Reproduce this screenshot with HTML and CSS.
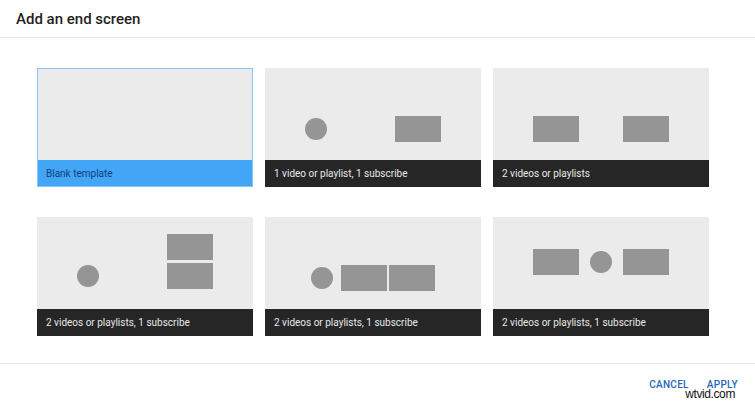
FILE: index.html
```html
<!DOCTYPE html>
<html lang="en">
<head>
    <meta charset="UTF-8">
    <meta name="viewport" content="width=device-width, initial-scale=1.0">
    <title>Add an end screen</title>
    <link rel="stylesheet" href="styles.css">
</head>
<body>
    <div class="dialog">
        <header class="dialog-header">
            <h1>Add an end screen</h1>
        </header>

        <main class="templates">
            <div class="template selected">
                <div class="preview"></div>
                <div class="label">Blank template</div>
            </div>
            <div class="template">
                <div class="preview">
                    <span class="shape circle c-2"></span>
                    <span class="shape rect r-2"></span>
                </div>
                <div class="label">1 video or playlist, 1 subscribe</div>
            </div>
            <div class="template">
                <div class="preview">
                    <span class="shape rect r-3a"></span>
                    <span class="shape rect r-3b"></span>
                </div>
                <div class="label">2 videos or playlists</div>
            </div>
            <div class="template">
                <div class="preview">
                    <span class="shape circle c-4"></span>
                    <span class="shape rect r-4a"></span>
                    <span class="shape rect r-4b"></span>
                </div>
                <div class="label">2 videos or playlists, 1 subscribe</div>
            </div>
            <div class="template">
                <div class="preview">
                    <span class="shape circle c-5"></span>
                    <span class="shape rect r-5a"></span>
                    <span class="shape rect r-5b"></span>
                </div>
                <div class="label">2 videos or playlists, 1 subscribe</div>
            </div>
            <div class="template">
                <div class="preview">
                    <span class="shape rect r-6a"></span>
                    <span class="shape circle c-6"></span>
                    <span class="shape rect r-6b"></span>
                </div>
                <div class="label">2 videos or playlists, 1 subscribe</div>
            </div>
        </main>

        <footer class="dialog-footer">
            <button class="btn">CANCEL</button>
            <button class="btn">APPLY</button>
            <span class="watermark">wtvid.com</span>
        </footer>
    </div>
</body>
</html>
```

FILE: styles.css
```css
* {
    margin: 0;
    padding: 0;
    box-sizing: border-box;
}

body {
    font-family: Roboto, 'Liberation Sans', Arial, sans-serif;
    color: #222;
    background-color: #fff;
}

.dialog {
    width: 755px;
    height: 403px;
    display: flex;
    flex-direction: column;
}

.dialog-header {
    height: 38px;
    padding: 9px 16px 0;
    border-bottom: 1px solid #e6e6e6;
}

.dialog-header h1 {
    font-size: 15px;
    font-weight: 500;
    line-height: 20px;
    color: #1f1f1f;
}

.templates {
    display: grid;
    grid-template-columns: repeat(3, 216px);
    grid-auto-rows: 119px;
    column-gap: 12px;
    row-gap: 30px;
    padding: 30px 0 0 37px;
    height: 326px;
    border-bottom: 1px solid #e6e6e6;
}

.template {
    display: flex;
    flex-direction: column;
    cursor: pointer;
}

.preview {
    position: relative;
    height: 92px;
    background-color: #ebebeb;
}

.label {
    height: 27px;
    padding: 0 9px;
    display: flex;
    align-items: center;
    font-size: 10px;
    background-color: #262626;
    color: #e8e8e8;
}

.template.selected {
    border: 1px solid #8cc4f2;
}

.template.selected .preview {
    height: 91px;
}

.template.selected .label {
    height: 26px;
    padding-left: 8px;
    background-color: #42a5f5;
    color: #0d3f80;
}

.shape {
    position: absolute;
    background-color: #959595;
}

.rect {
    width: 46px;
    height: 26px;
}

.circle {
    width: 22px;
    height: 22px;
    border-radius: 50%;
}

/* 1 video, 1 subscribe */
.c-2 { left: 40px; top: 50px; }
.r-2 { left: 130px; top: 48px; }

/* 2 videos */
.r-3a { left: 40px; top: 48px; }
.r-3b { left: 130px; top: 48px; }

/* stacked videos */
.c-4 { left: 40px; top: 48px; }
.r-4a { left: 130px; top: 17px; }
.r-4b { left: 130px; top: 46px; }

/* videos side by side */
.c-5 { left: 46px; top: 50px; }
.r-5a { left: 76px; top: 48px; }
.r-5b { left: 124px; top: 48px; }

/* circle between videos */
.r-6a { left: 40px; top: 32px; }
.c-6 { left: 97px; top: 34px; }
.r-6b { left: 130px; top: 32px; }

.dialog-footer {
    position: relative;
    flex: 1;
    display: flex;
    justify-content: flex-end;
    align-items: center;
    gap: 2px;
    padding: 2px 9px 0 0;
}

.btn {
    font-family: inherit;
    font-size: 10px;
    font-weight: 500;
    letter-spacing: 0.3px;
    color: #2467b8;
    background: none;
    border: none;
    padding: 6px 8px;
    cursor: pointer;
}

.watermark {
    position: absolute;
    right: 20px;
    bottom: 3px;
    font-family: 'Liberation Sans', Arial, sans-serif;
    font-size: 12px;
    letter-spacing: -0.4px;
    color: #111;
    background-color: #fff;
    line-height: 12px;
}
```
